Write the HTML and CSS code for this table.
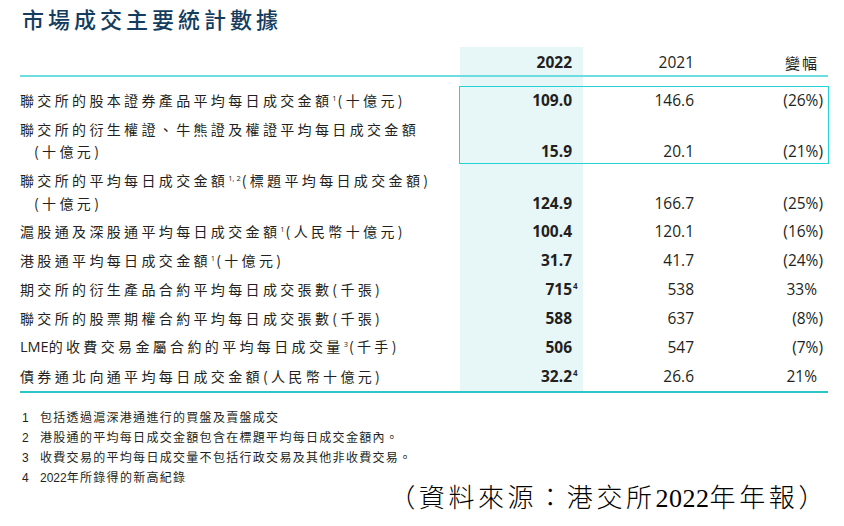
FILE: index.html
```html
<!DOCTYPE html>
<html lang="zh-Hant">
<head>
<meta charset="utf-8">
<title>市場成交主要統計數據</title>
<link rel="stylesheet" href="styles.css">
</head>
<body>
<div class="page">
  <h1 class="title">市場成交主要統計數據</h1>

  <div class="table">
    <div class="row head">
      <div class="label"></div>
      <div class="c c1 bold">2022</div>
      <div class="c c2">2021</div>
      <div class="c c3 cjk-head">變幅</div>
    </div>
    <div class="gap"></div>

    <div class="group">
      <div class="row">
        <div class="label">聯交所的股本證券產品平均每日成交金額<sup>1</sup>(十億元)</div>
        <div class="c c1 bold">109.0</div>
        <div class="c c2">146.6</div>
        <div class="c c3">(26%)</div>
      </div>
      <div class="row">
        <div class="label">聯交所的衍生權證、牛熊證及權證平均每日成交金額<br><span class="indent">(十億元)</span></div>
        <div class="c c1 bold">15.9</div>
        <div class="c c2">20.1</div>
        <div class="c c3">(21%)</div>
      </div>
    </div>

    <div class="row">
      <div class="label">聯交所的平均每日成交金額<sup>1, 2</sup>(標題平均每日成交金額)<br><span class="indent">(十億元)</span></div>
      <div class="c c1 bold">124.9</div>
      <div class="c c2">166.7</div>
      <div class="c c3">(25%)</div>
    </div>
    <div class="row">
      <div class="label">滬股通及深股通平均每日成交金額<sup>1</sup>(人民幣十億元)</div>
      <div class="c c1 bold">100.4</div>
      <div class="c c2">120.1</div>
      <div class="c c3">(16%)</div>
    </div>
    <div class="row">
      <div class="label">港股通平均每日成交金額<sup>1</sup>(十億元)</div>
      <div class="c c1 bold">31.7</div>
      <div class="c c2">41.7</div>
      <div class="c c3">(24%)</div>
    </div>
    <div class="row">
      <div class="label">期交所的衍生產品合約平均每日成交張數(千張)</div>
      <div class="c c1 bold">715<sup class="hang">4</sup></div>
      <div class="c c2">538</div>
      <div class="c c3 pos">33%</div>
    </div>
    <div class="row">
      <div class="label">聯交所的股票期權合約平均每日成交張數(千張)</div>
      <div class="c c1 bold">588</div>
      <div class="c c2">637</div>
      <div class="c c3">(8%)</div>
    </div>
    <div class="row">
      <div class="label"><span class="latin">LME</span>的收費交易金屬合約的平均每日成交量<sup>3</sup>(千手)</div>
      <div class="c c1 bold">506</div>
      <div class="c c2">547</div>
      <div class="c c3">(7%)</div>
    </div>
    <div class="row last">
      <div class="label">債券通北向通平均每日成交金額(人民幣十億元)</div>
      <div class="c c1 bold">32.2<sup class="hang">4</sup></div>
      <div class="c c2">26.6</div>
      <div class="c c3 pos">21%</div>
    </div>
  </div>

  <div class="notes">
    <div class="note"><span class="n">1</span><span>包括透過滬深港通進行的買盤及賣盤成交</span></div>
    <div class="note"><span class="n">2</span><span>港股通的平均每日成交金額包含在標題平均每日成交金額內。</span></div>
    <div class="note"><span class="n">3</span><span>收費交易的平均每日成交量不包括行政交易及其他非收費交易。</span></div>
    <div class="note"><span class="n">4</span><span><span class="year">2022</span>年所錄得的新高紀錄</span></div>
  </div>

  <div class="source">（資料來源：港交所<span class="digits">2022</span>年年報）</div>
</div>
</body>
</html>
```

FILE: styles.css
```css
html, body {
  margin: 0;
  padding: 0;
  background: #ffffff;
}

body {
  width: 844px;
  height: 526px;
  overflow: hidden;
  color: #231f20;
  font-family: "Noto Sans CJK TC", "Noto Sans", sans-serif;
}

.page {
  padding: 0 16px 0 20px;
}

.title {
  margin: 0;
  padding: 3px 0 0 2px;
  font-size: 22px;
  line-height: 30px;
  font-weight: 500;
  letter-spacing: 4px;
  color: #143c5e;
}

.table {
  margin-top: 14px;
  width: 808px;
  background: linear-gradient(to right,
    transparent 0, transparent 440px,
    #e7f6f7 440px, #e7f6f7 563px,
    transparent 563px);
}

.row {
  display: flex;
  align-items: flex-end;
  padding: 3.2px 0;
  line-height: 22.4px;
}

.row.head {
  padding: 3px 0 0;
  height: 25px;
  line-height: 25px;
  border-bottom: 2px solid #6ddde1;
}

.row.last {
  border-bottom: 2px solid #2cc5c8;
}

.gap {
  height: 9px;
}

.group {
  position: relative;
}

.group::after {
  content: "";
  position: absolute;
  left: 439px;
  right: -1px;
  top: 0;
  bottom: 2px;
  border: 1px solid #22d3d8;
  pointer-events: none;
}

.label {
  width: 440px;
  flex: none;
  font-size: 14px;
  letter-spacing: 3.35px;
  white-space: nowrap;
}

.label sup {
  font-family: "Open Sans", sans-serif;
  font-size: 7.5px;
  letter-spacing: 0;
  vertical-align: 5px;
  line-height: 0;
  margin: 0 1px 0 0;
}

.label .latin {
  font-family: "Open Sans", sans-serif;
  letter-spacing: 0;
  font-size: 14.5px;
}

.indent {
  display: inline-block;
  padding-left: 14px;
}

.c {
  flex: none;
  box-sizing: border-box;
  text-align: right;
  font-family: "Open Sans", sans-serif;
  font-size: 15.5px;
  white-space: nowrap;
}

.c1 {
  width: 123px;
  padding-right: 11px;
}

.c2 {
  width: 123px;
  padding-right: 12px;
}

.c3 {
  width: 122px;
  padding-right: 5px;
}

.c3.pos {
  padding-right: 11px;
}

.bold {
  font-weight: 700;
}

.cjk-head {
  font-family: "Noto Sans CJK TC", sans-serif;
  font-size: 15px;
  letter-spacing: 2px;
  padding-right: 9px;
}

.c sup.hang {
  font-size: 8px;
  vertical-align: 6px;
  line-height: 0;
  margin-left: 1px;
  margin-right: -5.6px;
  font-weight: 700;
}

.notes {
  margin-top: 15px;
}

.note {
  display: flex;
  font-family: "Liberation Sans", "Noto Sans CJK TC", sans-serif;
  font-size: 12px;
  line-height: 20px;
  letter-spacing: 1.3px;
}

.note .n {
  width: 20px;
  flex: none;
  padding-left: 2px;
  box-sizing: border-box;
  letter-spacing: 0;
}

.note .year {
  letter-spacing: 0;
}

.source {
  margin-top: -4px;
  text-align: right;
  padding-right: 0;
  font-family: "Liberation Serif", "Noto Sans CJK TC", serif;
  font-size: 26px;
  line-height: 30px;
  font-weight: 300;
  letter-spacing: 3.6px;
  color: #000000;
}

.source .digits {
  letter-spacing: 0.5px;
}
```
